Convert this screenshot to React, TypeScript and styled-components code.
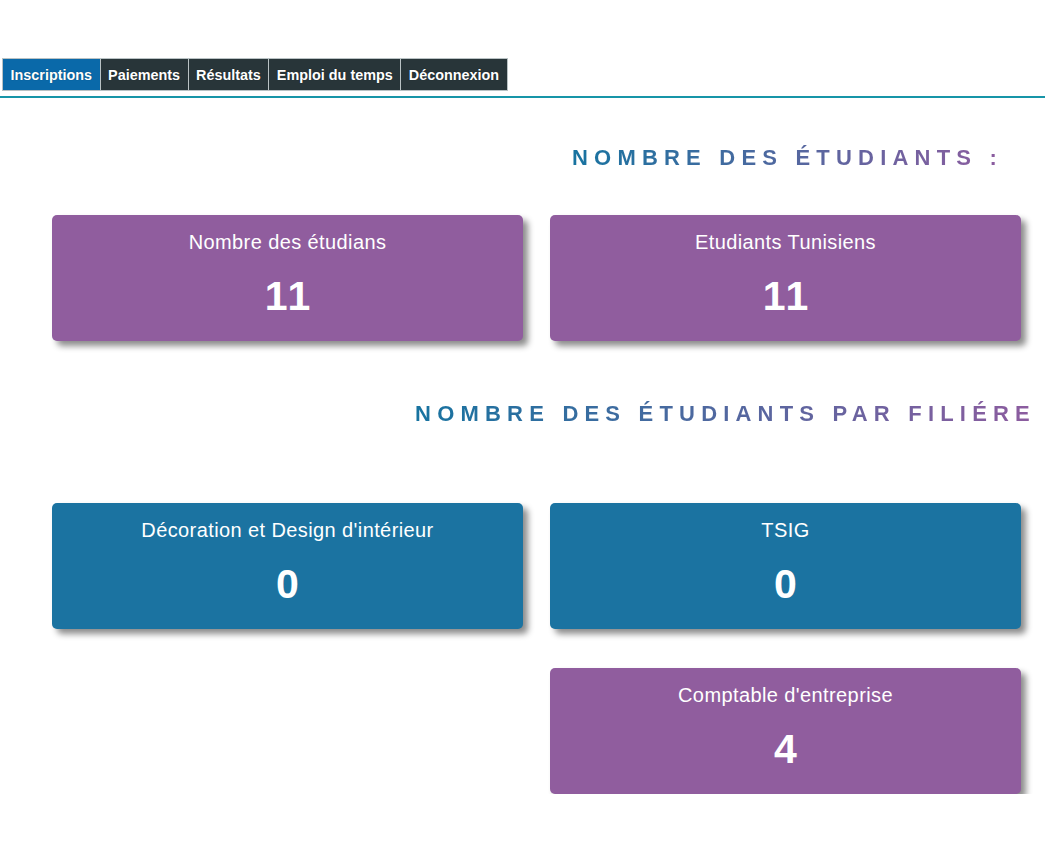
import React from "react";
import styled, { createGlobalStyle } from "styled-components";

const Global = createGlobalStyle`
  html, body { margin: 0; padding: 0; background: #fff; }
  body { font-family: "Liberation Sans", Arial, sans-serif; }
`;

const Page = styled.div`
  padding-top: 58px;
`;

const Nav = styled.nav`
  display: flex;
  padding-left: 2px;
  border-bottom: 2px solid #1795a8;
  padding-bottom: 5px;
`;

const Tab = styled.a<{ $active?: boolean }>`
  display: flex;
  align-items: center;
  height: 33px;
  box-sizing: border-box;
  padding: 0 7.5px;
  background: ${(p) => (p.$active ? "#0a69a9" : "#283539")};
  color: #fff;
  font-weight: bold;
  font-size: 14.4px;
  border: 1px solid #b9c2c4;
  margin-right: -1px;
  text-decoration: none;
  text-shadow: 0 0 1px rgba(0,0,0,0.4);
  white-space: nowrap;
`;

const Content = styled.div`
  width: 969px;
  margin-left: 52px;
`;

const Heading = styled.h2`
  margin: 0;
  font-size: 22px;
  font-weight: bold;
  letter-spacing: 6.2px;
  text-transform: uppercase;
  background: linear-gradient(90deg, #1773a0, #8d5c9f);
  -webkit-background-clip: text;
  background-clip: text;
  color: transparent;
  width: fit-content;
  white-space: nowrap;
`;

const HeadRow = styled.div<{ $top: number; $bottom: number; $justify: string; $shift?: number }>`
  display: flex;
  justify-content: ${(p) => p.$justify};
  padding-top: ${(p) => p.$top}px;
  padding-bottom: ${(p) => p.$bottom}px;
  margin-right: ${(p) => p.$shift ?? 0}px;
`;

const CenterCol = styled.div`
  display: flex;
  justify-content: center;
  width: 471px;
  margin-left: 502px;
`;

const Grid = styled.div`
  display: grid;
  grid-template-columns: 471px 471px;
  column-gap: 27px;
  row-gap: 39px;
`;

const Card = styled.div<{ $color: string; $col?: number }>`
  background: ${(p) => p.$color};
  border-radius: 5px;
  height: 126px;
  box-sizing: border-box;
  box-shadow: 5px 5px 6px rgba(0, 0, 0, 0.45);
  color: #fff;
  display: flex;
  flex-direction: column;
  align-items: center;
  padding-top: 17px;
  grid-column: ${(p) => p.$col ?? "auto"};
`;

const CardTitle = styled.div`
  font-size: 20px;
  letter-spacing: 0.4px;
  line-height: 20px;
`;

const CardValue = styled.div`
  font-size: 41px;
  font-weight: bold;
  line-height: 46px;
  margin-top: 21px;
  font-kerning: none;
`;

const PURPLE = "#905d9e";
const BLUE = "#1b73a1";

export default function App() {
  const tabs = ["Inscriptions", "Paiements", "Résultats", "Emploi du temps", "Déconnexion"];
  return (
    <Page>
      <Global />
      <Nav>
        {tabs.map((t, i) => (
          <Tab key={t} $active={i === 0}>{t}</Tab>
        ))}
      </Nav>
      <Content>
        <HeadRow $top={47} $bottom={44} $justify="flex-start">
          <CenterCol>
            <Heading>Nombre des étudiants :</Heading>
          </CenterCol>
        </HeadRow>
        <Grid>
          <Card $color={PURPLE}>
            <CardTitle>Nombre des étudians</CardTitle>
            <CardValue>11</CardValue>
          </Card>
          <Card $color={PURPLE}>
            <CardTitle>Etudiants Tunisiens</CardTitle>
            <CardValue>11</CardValue>
          </Card>
        </Grid>
        <HeadRow $top={60} $bottom={76} $justify="flex-end" $shift={-15}>
          <Heading>Nombre des étudiants par filiére</Heading>
        </HeadRow>
        <Grid>
          <Card $color={BLUE}>
            <CardTitle>Décoration et Design d'intérieur</CardTitle>
            <CardValue>0</CardValue>
          </Card>
          <Card $color={BLUE}>
            <CardTitle>TSIG</CardTitle>
            <CardValue>0</CardValue>
          </Card>
          <Card $color={PURPLE} $col={2}>
            <CardTitle>Comptable d'entreprise</CardTitle>
            <CardValue>4</CardValue>
          </Card>
        </Grid>
      </Content>
    </Page>
  );
}
